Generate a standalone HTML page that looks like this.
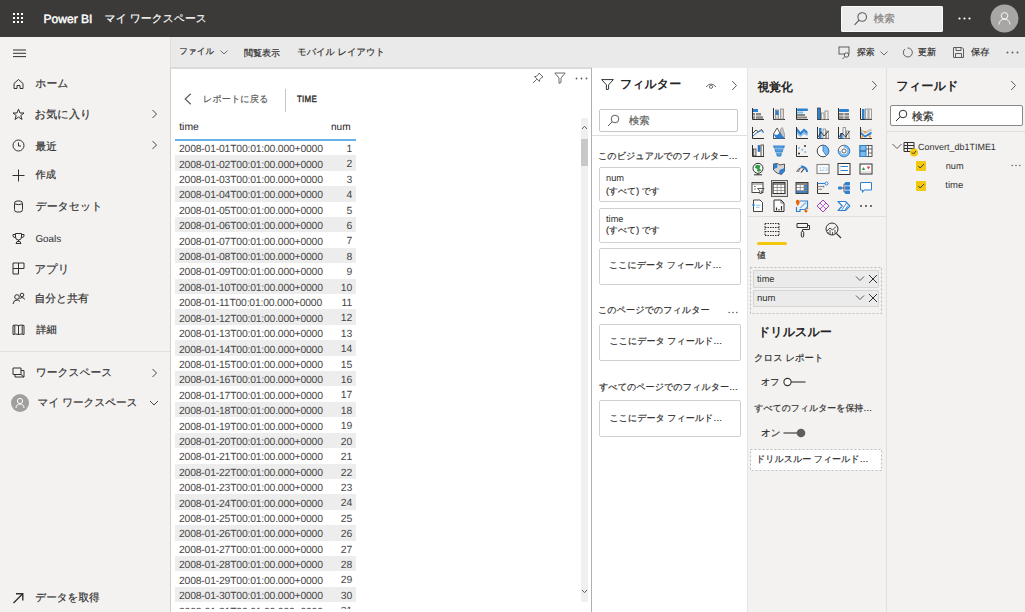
<!DOCTYPE html>
<html><head><meta charset="utf-8"><style>
html,body{margin:0;padding:0}
body{width:1025px;height:612px;overflow:hidden;position:relative;font-family:"Liberation Sans",sans-serif;background:#fff;text-rendering:geometricPrecision}
.a{position:absolute;white-space:nowrap;-webkit-text-stroke:0.2px currentColor}
svg.a{overflow:visible}
.ns{-webkit-text-stroke:0}
</style></head><body>
<div class="a" style="left:0px;top:0px;width:1025px;height:37px;background:#3b3a39;"></div>
<div class="a" style="left:0px;top:37px;width:170px;height:575px;background:#f3f2f1;"></div>
<div class="a" style="left:170px;top:37px;width:855px;height:31px;background:#eaeaea;"></div>
<div class="a" style="left:170px;top:67px;width:422px;height:2px;background:#dadada;"></div>
<div class="a" style="left:170px;top:37px;width:1px;height:30px;background:#dddddd;"></div>
<div class="a" style="left:170px;top:68px;width:1px;height:544px;background:#cfcfcf;"></div>
<div class="a" style="left:171px;top:69px;width:420px;height:543px;background:#ffffff;"></div>
<div class="a" style="left:591px;top:68px;width:1.3px;height:544px;background:#b0b0b0;"></div>
<div class="a" style="left:592px;top:68px;width:155px;height:544px;background:#ffffff;"></div>
<div class="a" style="left:746.5px;top:68px;width:1.7px;height:544px;background:#e4e4e4;"></div>
<div class="a" style="left:748px;top:68px;width:138px;height:544px;background:#f3f2f1;"></div>
<div class="a" style="left:886px;top:68px;width:1px;height:544px;background:#e1dfdd;"></div>
<div class="a" style="left:887px;top:68px;width:138px;height:544px;background:#f3f2f1;"></div>
<svg class="a" style="left:12px;top:12px;" width="12" height="12" viewBox="0 0 12 12"><rect x="1" y="1" width="2" height="2" fill="#fff"/><rect x="1" y="5" width="2" height="2" fill="#fff"/><rect x="1" y="9" width="2" height="2" fill="#fff"/><rect x="5" y="1" width="2" height="2" fill="#fff"/><rect x="5" y="5" width="2" height="2" fill="#fff"/><rect x="5" y="9" width="2" height="2" fill="#fff"/><rect x="9" y="1" width="2" height="2" fill="#fff"/><rect x="9" y="5" width="2" height="2" fill="#fff"/><rect x="9" y="9" width="2" height="2" fill="#fff"/></svg>
<div class="a ns" style="left:43.60px;top:11.00px;font-size:12.04px;line-height:16px;color:#ffffff;font-weight:400;-webkit-text-stroke:0.45px currentColor;">Power BI</div>
<div class="a" style="left:104.60px;top:10.60px;font-size:10.84px;line-height:16px;color:#ffffff;font-weight:400;">マイ ワークスペース</div>
<div class="a" style="left:840.5px;top:5.5px;width:102px;height:26px;background:#ececec;border-radius:2px;box-shadow:inset 0 0 0 1px #fafafa;"></div>
<svg class="a" style="left:853.5px;top:11.5px;" width="14" height="14" viewBox="0 0 14 14"><circle cx="8.2" cy="5" r="4.3" fill="none" stroke="#605e5c" stroke-width="1.1"/><line x1="5.2" y1="8" x2="0.6" y2="12.8" stroke="#605e5c" stroke-width="1.1"/></svg>
<div class="a" style="left:873.80px;top:11.80px;font-size:10.49px;line-height:16px;color:#858381;font-weight:400;">検索</div>
<svg class="a" style="left:958px;top:17px;" width="13" height="3" viewBox="0 0 13 3"><circle cx="1.5" cy="1.5" r="1.1" fill="#fff"/><circle cx="6.5" cy="1.5" r="1.1" fill="#fff"/><circle cx="11.5" cy="1.5" r="1.1" fill="#fff"/></svg>
<svg class="a" style="left:990px;top:4px;" width="29" height="29" viewBox="0 0 29 29"><circle cx="14.5" cy="14.5" r="14" fill="#a8a6a4"/><circle cx="14.5" cy="11.8" r="3.3" fill="none" stroke="#fff" stroke-width="0.9"/><path d="M9 20.5c0-3.2 2.5-5.4 5.5-5.4s5.5 2.2 5.5 5.4" fill="none" stroke="#fff" stroke-width="0.9"/></svg>
<svg class="a" style="left:13px;top:49px;" width="13" height="9" viewBox="0 0 13 9"><rect x="0" y="0.5" width="13" height="1" fill="#323130"/><rect x="0" y="3.8" width="13" height="1" fill="#323130"/><rect x="0" y="7.1" width="13" height="1" fill="#323130"/></svg>
<svg class="a" style="left:12px;top:77.2px;" width="13" height="13" viewBox="0 0 13 13"><path d="M2 6.5L6.5 2.5L11 6.5V11.5H8V8.5H5V11.5H2Z" fill="none" stroke="#323130" stroke-width="1"/></svg>
<div class="a" style="left:35.30px;top:75.75px;font-size:10.89px;line-height:16px;color:#323130;font-weight:400;">ホーム</div>
<svg class="a" style="left:12px;top:107.9px;" width="13" height="13" viewBox="0 0 13 13"><path d="M6.5 1.2L8 5H12L8.8 7.5L10 11.5L6.5 9L3 11.5L4.2 7.5L1 5H5Z" fill="none" stroke="#323130" stroke-width="1"/></svg>
<div class="a" style="left:34.60px;top:106.65px;font-size:11.24px;line-height:16px;color:#323130;font-weight:400;">お気に入り</div>
<svg class="a" style="left:151px;top:109.4px;" width="7" height="10" viewBox="0 0 7 10"><path d="M1.5 1L5.5 5L1.5 9" fill="none" stroke="#484644" stroke-width="1"/></svg>
<svg class="a" style="left:12px;top:138.8px;" width="13" height="13" viewBox="0 0 13 13"><circle cx="6.5" cy="6.5" r="5.5" fill="none" stroke="#323130" stroke-width="1"/><path d="M6.5 3.5V7H9" fill="none" stroke="#323130" stroke-width="1"/></svg>
<div class="a" style="left:35.60px;top:138.60px;font-size:10.59px;line-height:16px;color:#323130;font-weight:400;">最近</div>
<svg class="a" style="left:151px;top:140.3px;" width="7" height="10" viewBox="0 0 7 10"><path d="M1.5 1L5.5 5L1.5 9" fill="none" stroke="#484644" stroke-width="1"/></svg>
<svg class="a" style="left:12px;top:168.9px;" width="13" height="13" viewBox="0 0 13 13"><path d="M6.5 0.5V12.5M0.5 6.5H12.5" stroke="#323130" stroke-width="1"/></svg>
<div class="a" style="left:35.60px;top:167.80px;font-size:10.27px;line-height:16px;color:#323130;font-weight:400;">作成</div>
<svg class="a" style="left:12px;top:200.0px;" width="13" height="13" viewBox="0 0 13 13"><rect x="2.5" y="1" width="8" height="11" rx="2.5" fill="none" stroke="#323130" stroke-width="1"/><path d="M2.5 3.8Q6.5 5.6 10.5 3.8" fill="none" stroke="#323130" stroke-width="1"/></svg>
<div class="a" style="left:35.40px;top:198.70px;font-size:10.99px;line-height:16px;color:#323130;font-weight:400;">データセット</div>
<svg class="a" style="left:12px;top:231.5px;" width="13" height="13" viewBox="0 0 13 13"><path d="M3.5 1.5H9.5V5Q9.5 8 6.5 8Q3.5 8 3.5 5Z M3.5 2.5H1V4Q1 5.5 3.6 5.6 M9.5 2.5H12V4Q12 5.5 9.4 5.6 M6.5 8V9.5 M4 11.5H9L8 9.5H5Z" fill="none" stroke="#323130" stroke-width="1"/></svg>
<div class="a ns" style="left:35.40px;top:231.65px;font-size:9.91px;line-height:16px;color:#323130;font-weight:400;">Goals</div>
<svg class="a" style="left:12px;top:261.8px;" width="13" height="13" viewBox="0 0 13 13"><path d="M1 1H6.5V12H1Z M6.5 1H12V6.5H6.5 M1 6.5H6.5" fill="none" stroke="#323130" stroke-width="1"/></svg>
<div class="a" style="left:34.40px;top:261.60px;font-size:11.46px;line-height:16px;color:#323130;font-weight:400;">アプリ</div>
<svg class="a" style="left:12px;top:291.9px;" width="13" height="13" viewBox="0 0 13 13"><circle cx="5" cy="5" r="2.3" fill="none" stroke="#323130" stroke-width="1"/><path d="M1 12Q1.5 8 5 8Q7 8 8 9.5" fill="none" stroke="#323130" stroke-width="1"/><circle cx="10" cy="3" r="1.8" fill="none" stroke="#323130" stroke-width="1"/><path d="M7.5 7Q8.5 5.5 10 5.5Q12 5.5 12.5 7.5" fill="none" stroke="#323130" stroke-width="1"/></svg>
<div class="a" style="left:34.40px;top:290.70px;font-size:10.84px;line-height:16px;color:#323130;font-weight:400;">自分と共有</div>
<svg class="a" style="left:12px;top:323.3px;" width="13" height="13" viewBox="0 0 13 13"><path d="M1 2.5Q3.5 1.5 6.5 2.5Q9.5 1.5 12 2.5V11.5Q9.5 10.5 6.5 11.5Q3.5 10.5 1 11.5Z M6.5 2.5V11.5 M2.8 2.2V10.8 M10.2 2.2V10.8" fill="none" stroke="#323130" stroke-width="1"/></svg>
<div class="a" style="left:36.20px;top:322.70px;font-size:10.24px;line-height:16px;color:#323130;font-weight:400;">詳細</div>
<svg class="a" style="left:12px;top:366.0px;" width="13" height="13" viewBox="0 0 13 13"><path d="M1 2H9V8.5H1Z M3 8.5V11H12V4.5H9" fill="none" stroke="#323130" stroke-width="1"/><path d="M9 8.5L12 11" stroke="#323130" stroke-width="1"/></svg>
<div class="a" style="left:35.70px;top:364.70px;font-size:10.78px;line-height:16px;color:#323130;font-weight:400;">ワークスペース</div>
<svg class="a" style="left:151px;top:367.5px;" width="7" height="10" viewBox="0 0 7 10"><path d="M1.5 1L5.5 5L1.5 9" fill="none" stroke="#484644" stroke-width="1"/></svg>
<svg class="a" style="left:11px;top:394px;" width="18" height="18" viewBox="0 0 18 18"><circle cx="9" cy="9" r="9" fill="#a19f9d"/><circle cx="9" cy="7" r="2.6" fill="none" stroke="#fff" stroke-width="1"/><path d="M5 14c0-2.5 1.8-4 4-4s4 1.5 4 4" fill="none" stroke="#fff" stroke-width="1"/></svg>
<div class="a" style="left:37.60px;top:395.00px;font-size:10.59px;line-height:16px;color:#323130;font-weight:400;">マイ ワークスペース</div>
<svg class="a" style="left:149px;top:400px;" width="10" height="6" viewBox="0 0 10 6"><path d="M1 1L5 5L9 1" fill="none" stroke="#484644" stroke-width="1"/></svg>
<svg class="a" style="left:12px;top:590.8px;" width="13" height="13" viewBox="0 0 13 13"><path d="M1.5 12L10.5 3M4 2.8H10.8V9.6" fill="none" stroke="#323130" stroke-width="1.4"/></svg>
<div class="a" style="left:35.30px;top:590.00px;font-size:10.62px;line-height:16px;color:#323130;font-weight:400;">データを取得</div>
<div class="a" style="left:0px;top:351px;width:170px;height:1px;background:#e1dfdd;"></div>
<div class="a" style="left:179.20px;top:43.40px;font-size:8.59px;line-height:16px;color:#323130;font-weight:400;">ファイル</div>
<svg class="a" style="left:220px;top:50px;" width="8" height="5" viewBox="0 0 8 5"><path d="M0.5 0.5L4 4L7.5 0.5" fill="none" stroke="#605e5c" stroke-width="0.9"/></svg>
<div class="a" style="left:244.00px;top:44.60px;font-size:8.98px;line-height:16px;color:#323130;font-weight:400;">閲覧表示</div>
<div class="a" style="left:297.20px;top:43.60px;font-size:9.25px;line-height:16px;color:#323130;font-weight:400;">モバイル レイアウト</div>
<svg class="a" style="left:838px;top:46px;" width="13" height="13" viewBox="0 0 13 13"><rect x="1" y="1" width="10" height="7" fill="none" stroke="#605e5c" stroke-width="1"/><circle cx="8.5" cy="9" r="2.2" fill="#eaeaea" stroke="#605e5c" stroke-width="1"/><line x1="7" y1="10.5" x2="4.5" y2="13" stroke="#605e5c" stroke-width="1"/></svg>
<div class="a" style="left:857.08px;top:44.46px;font-size:8.79px;line-height:16px;color:#323130;font-weight:400;">探索</div>
<svg class="a" style="left:880px;top:51px;" width="8" height="5" viewBox="0 0 8 5"><path d="M0.5 0.5L4 4L7.5 0.5" fill="none" stroke="#605e5c" stroke-width="0.9"/></svg>
<svg class="a" style="left:902px;top:47px;" width="11" height="11" viewBox="0 0 11 11"><path d="M3 2A4.5 4.5 0 1 0 5.5 1" fill="none" stroke="#605e5c" stroke-width="1"/></svg>
<div class="a" style="left:917.77px;top:44.46px;font-size:9.18px;line-height:16px;color:#323130;font-weight:400;">更新</div>
<svg class="a" style="left:953px;top:47px;" width="11" height="11" viewBox="0 0 11 11"><path d="M0.5 0.5H9L10.5 2V10.5H0.5Z M3 0.5V3.5H8V0.5 M2.5 10.5V6.5H8.5V10.5" fill="none" stroke="#605e5c" stroke-width="1"/></svg>
<div class="a" style="left:971.00px;top:44.46px;font-size:9.23px;line-height:16px;color:#323130;font-weight:400;">保存</div>
<svg class="a" style="left:1006px;top:51px;" width="13" height="3" viewBox="0 0 13 3"><circle cx="1.5" cy="1.5" r="1" fill="#605e5c"/><circle cx="6.5" cy="1.5" r="1" fill="#605e5c"/><circle cx="11.5" cy="1.5" r="1" fill="#605e5c"/></svg>
<svg class="a" style="left:532px;top:72px;" width="12" height="12" viewBox="0 0 12 12"><path d="M7 1L11 5L9.5 5.5L7.5 8L7.5 9.5L2.5 4.5L4 4.5L6.5 2.5Z M4.8 7.2L1 11" fill="none" stroke="#605e5c" stroke-width="0.9"/></svg>
<svg class="a" style="left:554px;top:72px;" width="12" height="12" viewBox="0 0 12 12"><path d="M0.8 1H11.2L7 6V10.5L5 11.3V6Z" fill="none" stroke="#605e5c" stroke-width="0.9"/></svg>
<svg class="a" style="left:575px;top:77px;" width="13" height="3" viewBox="0 0 13 3"><circle cx="1.5" cy="1.5" r="0.9" fill="#605e5c"/><circle cx="6.5" cy="1.5" r="0.9" fill="#605e5c"/><circle cx="11.5" cy="1.5" r="0.9" fill="#605e5c"/></svg>
<svg class="a" style="left:184px;top:92.5px;" width="8" height="12" viewBox="0 0 8 12"><path d="M6.8 0.8L1.2 6L6.8 11.2" fill="none" stroke="#605e5c" stroke-width="1.2"/></svg>
<div class="a" style="left:203.00px;top:90.90px;font-size:9.19px;line-height:16px;color:#605e5c;font-weight:400;">レポートに戻る</div>
<div class="a" style="left:285px;top:89px;width:1px;height:23px;background:#c8c6c4;"></div>
<div class="a ns" style="left:297.37px;top:90.52px;font-size:9.00px;line-height:16px;color:#323130;font-weight:400;letter-spacing:0.3px;-webkit-text-stroke:0.4px currentColor;transform:scaleX(0.88);transform-origin:0 50%;">TIME</div>
<div class="a ns" style="left:179.20px;top:120.10px;font-size:10.39px;line-height:16px;color:#252423;font-weight:400;">time</div>
<div class="a ns" style="left:331.00px;top:120.00px;font-size:10.11px;line-height:16px;color:#252423;font-weight:400;">num</div>
<div class="a" style="left:175px;top:139px;width:181px;height:2px;background:#6cb0e8;"></div>
<div class="a" style="left:171px;top:68px;width:405px;height:541px;overflow:hidden">
<div class="a ns" style="left:8px;top:74.20px;font-size:10.4px;letter-spacing:-0.2px;line-height:15.4px;color:#464544">2008-01-01T00:01:00.000+0000</div>
<div class="a ns" style="left:130px;top:73.90px;width:51px;text-align:right;font-size:10.4px;letter-spacing:-0.2px;line-height:15.4px;color:#464544">1</div>
<div class="a" style="left:4px;top:87.31px;width:181px;height:15.4px;background:#ededed"></div>
<div class="a ns" style="left:8px;top:89.61px;font-size:10.4px;letter-spacing:-0.2px;line-height:15.4px;color:#464544">2008-01-02T00:01:00.000+0000</div>
<div class="a ns" style="left:130px;top:89.31px;width:51px;text-align:right;font-size:10.4px;letter-spacing:-0.2px;line-height:15.4px;color:#464544">2</div>
<div class="a ns" style="left:8px;top:105.02px;font-size:10.4px;letter-spacing:-0.2px;line-height:15.4px;color:#464544">2008-01-03T00:01:00.000+0000</div>
<div class="a ns" style="left:130px;top:104.72px;width:51px;text-align:right;font-size:10.4px;letter-spacing:-0.2px;line-height:15.4px;color:#464544">3</div>
<div class="a" style="left:4px;top:118.13px;width:181px;height:15.4px;background:#ededed"></div>
<div class="a ns" style="left:8px;top:120.43px;font-size:10.4px;letter-spacing:-0.2px;line-height:15.4px;color:#464544">2008-01-04T00:01:00.000+0000</div>
<div class="a ns" style="left:130px;top:120.13px;width:51px;text-align:right;font-size:10.4px;letter-spacing:-0.2px;line-height:15.4px;color:#464544">4</div>
<div class="a ns" style="left:8px;top:135.84px;font-size:10.4px;letter-spacing:-0.2px;line-height:15.4px;color:#464544">2008-01-05T00:01:00.000+0000</div>
<div class="a ns" style="left:130px;top:135.54px;width:51px;text-align:right;font-size:10.4px;letter-spacing:-0.2px;line-height:15.4px;color:#464544">5</div>
<div class="a" style="left:4px;top:148.95px;width:181px;height:15.4px;background:#ededed"></div>
<div class="a ns" style="left:8px;top:151.25px;font-size:10.4px;letter-spacing:-0.2px;line-height:15.4px;color:#464544">2008-01-06T00:01:00.000+0000</div>
<div class="a ns" style="left:130px;top:150.95px;width:51px;text-align:right;font-size:10.4px;letter-spacing:-0.2px;line-height:15.4px;color:#464544">6</div>
<div class="a ns" style="left:8px;top:166.66px;font-size:10.4px;letter-spacing:-0.2px;line-height:15.4px;color:#464544">2008-01-07T00:01:00.000+0000</div>
<div class="a ns" style="left:130px;top:166.36px;width:51px;text-align:right;font-size:10.4px;letter-spacing:-0.2px;line-height:15.4px;color:#464544">7</div>
<div class="a" style="left:4px;top:179.77px;width:181px;height:15.4px;background:#ededed"></div>
<div class="a ns" style="left:8px;top:182.07px;font-size:10.4px;letter-spacing:-0.2px;line-height:15.4px;color:#464544">2008-01-08T00:01:00.000+0000</div>
<div class="a ns" style="left:130px;top:181.77px;width:51px;text-align:right;font-size:10.4px;letter-spacing:-0.2px;line-height:15.4px;color:#464544">8</div>
<div class="a ns" style="left:8px;top:197.48px;font-size:10.4px;letter-spacing:-0.2px;line-height:15.4px;color:#464544">2008-01-09T00:01:00.000+0000</div>
<div class="a ns" style="left:130px;top:197.18px;width:51px;text-align:right;font-size:10.4px;letter-spacing:-0.2px;line-height:15.4px;color:#464544">9</div>
<div class="a" style="left:4px;top:210.59px;width:181px;height:15.4px;background:#ededed"></div>
<div class="a ns" style="left:8px;top:212.89px;font-size:10.4px;letter-spacing:-0.2px;line-height:15.4px;color:#464544">2008-01-10T00:01:00.000+0000</div>
<div class="a ns" style="left:130px;top:212.59px;width:51px;text-align:right;font-size:10.4px;letter-spacing:-0.2px;line-height:15.4px;color:#464544">10</div>
<div class="a ns" style="left:8px;top:228.30px;font-size:10.4px;letter-spacing:-0.2px;line-height:15.4px;color:#464544">2008-01-11T00:01:00.000+0000</div>
<div class="a ns" style="left:130px;top:228.00px;width:51px;text-align:right;font-size:10.4px;letter-spacing:-0.2px;line-height:15.4px;color:#464544">11</div>
<div class="a" style="left:4px;top:241.41px;width:181px;height:15.4px;background:#ededed"></div>
<div class="a ns" style="left:8px;top:243.71px;font-size:10.4px;letter-spacing:-0.2px;line-height:15.4px;color:#464544">2008-01-12T00:01:00.000+0000</div>
<div class="a ns" style="left:130px;top:243.41px;width:51px;text-align:right;font-size:10.4px;letter-spacing:-0.2px;line-height:15.4px;color:#464544">12</div>
<div class="a ns" style="left:8px;top:259.12px;font-size:10.4px;letter-spacing:-0.2px;line-height:15.4px;color:#464544">2008-01-13T00:01:00.000+0000</div>
<div class="a ns" style="left:130px;top:258.82px;width:51px;text-align:right;font-size:10.4px;letter-spacing:-0.2px;line-height:15.4px;color:#464544">13</div>
<div class="a" style="left:4px;top:272.23px;width:181px;height:15.4px;background:#ededed"></div>
<div class="a ns" style="left:8px;top:274.53px;font-size:10.4px;letter-spacing:-0.2px;line-height:15.4px;color:#464544">2008-01-14T00:01:00.000+0000</div>
<div class="a ns" style="left:130px;top:274.23px;width:51px;text-align:right;font-size:10.4px;letter-spacing:-0.2px;line-height:15.4px;color:#464544">14</div>
<div class="a ns" style="left:8px;top:289.94px;font-size:10.4px;letter-spacing:-0.2px;line-height:15.4px;color:#464544">2008-01-15T00:01:00.000+0000</div>
<div class="a ns" style="left:130px;top:289.64px;width:51px;text-align:right;font-size:10.4px;letter-spacing:-0.2px;line-height:15.4px;color:#464544">15</div>
<div class="a" style="left:4px;top:303.05px;width:181px;height:15.4px;background:#ededed"></div>
<div class="a ns" style="left:8px;top:305.35px;font-size:10.4px;letter-spacing:-0.2px;line-height:15.4px;color:#464544">2008-01-16T00:01:00.000+0000</div>
<div class="a ns" style="left:130px;top:305.05px;width:51px;text-align:right;font-size:10.4px;letter-spacing:-0.2px;line-height:15.4px;color:#464544">16</div>
<div class="a ns" style="left:8px;top:320.76px;font-size:10.4px;letter-spacing:-0.2px;line-height:15.4px;color:#464544">2008-01-17T00:01:00.000+0000</div>
<div class="a ns" style="left:130px;top:320.46px;width:51px;text-align:right;font-size:10.4px;letter-spacing:-0.2px;line-height:15.4px;color:#464544">17</div>
<div class="a" style="left:4px;top:333.87px;width:181px;height:15.4px;background:#ededed"></div>
<div class="a ns" style="left:8px;top:336.17px;font-size:10.4px;letter-spacing:-0.2px;line-height:15.4px;color:#464544">2008-01-18T00:01:00.000+0000</div>
<div class="a ns" style="left:130px;top:335.87px;width:51px;text-align:right;font-size:10.4px;letter-spacing:-0.2px;line-height:15.4px;color:#464544">18</div>
<div class="a ns" style="left:8px;top:351.58px;font-size:10.4px;letter-spacing:-0.2px;line-height:15.4px;color:#464544">2008-01-19T00:01:00.000+0000</div>
<div class="a ns" style="left:130px;top:351.28px;width:51px;text-align:right;font-size:10.4px;letter-spacing:-0.2px;line-height:15.4px;color:#464544">19</div>
<div class="a" style="left:4px;top:364.69px;width:181px;height:15.4px;background:#ededed"></div>
<div class="a ns" style="left:8px;top:366.99px;font-size:10.4px;letter-spacing:-0.2px;line-height:15.4px;color:#464544">2008-01-20T00:01:00.000+0000</div>
<div class="a ns" style="left:130px;top:366.69px;width:51px;text-align:right;font-size:10.4px;letter-spacing:-0.2px;line-height:15.4px;color:#464544">20</div>
<div class="a ns" style="left:8px;top:382.40px;font-size:10.4px;letter-spacing:-0.2px;line-height:15.4px;color:#464544">2008-01-21T00:01:00.000+0000</div>
<div class="a ns" style="left:130px;top:382.10px;width:51px;text-align:right;font-size:10.4px;letter-spacing:-0.2px;line-height:15.4px;color:#464544">21</div>
<div class="a" style="left:4px;top:395.51px;width:181px;height:15.4px;background:#ededed"></div>
<div class="a ns" style="left:8px;top:397.81px;font-size:10.4px;letter-spacing:-0.2px;line-height:15.4px;color:#464544">2008-01-22T00:01:00.000+0000</div>
<div class="a ns" style="left:130px;top:397.51px;width:51px;text-align:right;font-size:10.4px;letter-spacing:-0.2px;line-height:15.4px;color:#464544">22</div>
<div class="a ns" style="left:8px;top:413.22px;font-size:10.4px;letter-spacing:-0.2px;line-height:15.4px;color:#464544">2008-01-23T00:01:00.000+0000</div>
<div class="a ns" style="left:130px;top:412.92px;width:51px;text-align:right;font-size:10.4px;letter-spacing:-0.2px;line-height:15.4px;color:#464544">23</div>
<div class="a" style="left:4px;top:426.33px;width:181px;height:15.4px;background:#ededed"></div>
<div class="a ns" style="left:8px;top:428.63px;font-size:10.4px;letter-spacing:-0.2px;line-height:15.4px;color:#464544">2008-01-24T00:01:00.000+0000</div>
<div class="a ns" style="left:130px;top:428.33px;width:51px;text-align:right;font-size:10.4px;letter-spacing:-0.2px;line-height:15.4px;color:#464544">24</div>
<div class="a ns" style="left:8px;top:444.04px;font-size:10.4px;letter-spacing:-0.2px;line-height:15.4px;color:#464544">2008-01-25T00:01:00.000+0000</div>
<div class="a ns" style="left:130px;top:443.74px;width:51px;text-align:right;font-size:10.4px;letter-spacing:-0.2px;line-height:15.4px;color:#464544">25</div>
<div class="a" style="left:4px;top:457.15px;width:181px;height:15.4px;background:#ededed"></div>
<div class="a ns" style="left:8px;top:459.45px;font-size:10.4px;letter-spacing:-0.2px;line-height:15.4px;color:#464544">2008-01-26T00:01:00.000+0000</div>
<div class="a ns" style="left:130px;top:459.15px;width:51px;text-align:right;font-size:10.4px;letter-spacing:-0.2px;line-height:15.4px;color:#464544">26</div>
<div class="a ns" style="left:8px;top:474.86px;font-size:10.4px;letter-spacing:-0.2px;line-height:15.4px;color:#464544">2008-01-27T00:01:00.000+0000</div>
<div class="a ns" style="left:130px;top:474.56px;width:51px;text-align:right;font-size:10.4px;letter-spacing:-0.2px;line-height:15.4px;color:#464544">27</div>
<div class="a" style="left:4px;top:487.97px;width:181px;height:15.4px;background:#ededed"></div>
<div class="a ns" style="left:8px;top:490.27px;font-size:10.4px;letter-spacing:-0.2px;line-height:15.4px;color:#464544">2008-01-28T00:01:00.000+0000</div>
<div class="a ns" style="left:130px;top:489.97px;width:51px;text-align:right;font-size:10.4px;letter-spacing:-0.2px;line-height:15.4px;color:#464544">28</div>
<div class="a ns" style="left:8px;top:505.68px;font-size:10.4px;letter-spacing:-0.2px;line-height:15.4px;color:#464544">2008-01-29T00:01:00.000+0000</div>
<div class="a ns" style="left:130px;top:505.38px;width:51px;text-align:right;font-size:10.4px;letter-spacing:-0.2px;line-height:15.4px;color:#464544">29</div>
<div class="a" style="left:4px;top:518.79px;width:181px;height:15.4px;background:#ededed"></div>
<div class="a ns" style="left:8px;top:521.09px;font-size:10.4px;letter-spacing:-0.2px;line-height:15.4px;color:#464544">2008-01-30T00:01:00.000+0000</div>
<div class="a ns" style="left:130px;top:520.79px;width:51px;text-align:right;font-size:10.4px;letter-spacing:-0.2px;line-height:15.4px;color:#464544">30</div>
<div class="a ns" style="left:8px;top:536.50px;font-size:10.4px;letter-spacing:-0.2px;line-height:15.4px;color:#464544">2008-01-31T00:01:00.000+0000</div>
<div class="a ns" style="left:130px;top:536.20px;width:51px;text-align:right;font-size:10.4px;letter-spacing:-0.2px;line-height:15.4px;color:#464544">31</div>
</div>
<div class="a" style="left:581px;top:118px;width:7px;height:484px;background:#f0f0f0;"></div>
<div class="a" style="left:581px;top:139px;width:7px;height:27px;background:#c8c8c8;"></div>
<svg class="a" style="left:581px;top:125px;" width="7" height="5" viewBox="0 0 7 5"><path d="M1 4L3.5 1.3L6 4" fill="none" stroke="#605e5c" stroke-width="1"/></svg>
<svg class="a" style="left:581px;top:589px;" width="7" height="5" viewBox="0 0 7 5"><path d="M1 1L3.5 3.7L6 1" fill="none" stroke="#605e5c" stroke-width="1"/></svg>
<svg class="a" style="left:601px;top:78.5px;" width="13" height="11" viewBox="0 0 13 11"><path d="M0.6 0.6H12.4L7.6 5.8V10.2L5.4 10.6V5.8Z" fill="none" stroke="#323130" stroke-width="1" stroke-linejoin="round"/></svg>
<div class="a ns" style="left:620.00px;top:75.90px;font-size:12.00px;line-height:16px;color:#252423;font-weight:700;">フィルター</div>
<svg class="a" style="left:705px;top:81px;" width="12" height="9" viewBox="0 0 12 9"><path d="M1 6Q6 0 11 6" fill="none" stroke="#605e5c" stroke-width="0.9"/><circle cx="6" cy="5.8" r="1.6" fill="none" stroke="#605e5c" stroke-width="0.9"/></svg>
<svg class="a" style="left:731px;top:80px;" width="7" height="11" viewBox="0 0 7 11"><path d="M1.2 1L5.5 5.5L1.2 10" fill="none" stroke="#605e5c" stroke-width="1"/></svg>
<div class="a" style="left:598.5px;top:108.5px;width:137px;height:21px;border:1px solid #c8c6c4;border-radius:2px"></div>
<svg class="a" style="left:607px;top:114px;" width="13" height="13" viewBox="0 0 13 13"><circle cx="8" cy="5" r="3.8" fill="none" stroke="#605e5c" stroke-width="1"/><line x1="5.3" y1="7.7" x2="1" y2="12" stroke="#605e5c" stroke-width="1"/></svg>
<div class="a" style="left:629.00px;top:113.50px;font-size:10.30px;line-height:16px;color:#605e5c;font-weight:400;">検索</div>
<div class="a" style="left:592px;top:135px;width:155px;height:1px;background:#e1dfdd;"></div>
<div class="a" style="left:598.00px;top:147.70px;font-size:9.14px;line-height:16px;color:#323130;font-weight:400;">このビジュアルでのフィルター…</div>
<div class="a" style="left:598.5px;top:167.4px;width:140px;height:33.0px;border:1px solid #d2d0ce;border-radius:2px;background:#fff"></div>
<div class="a ns" style="left:606.00px;top:169.50px;font-size:9.25px;line-height:16px;color:#323130;font-weight:400;">num</div>
<div class="a" style="left:606.00px;top:182.60px;font-size:8.90px;line-height:16px;color:#323130;font-weight:400;">(すべて) です</div>
<div class="a" style="left:598.5px;top:207.8px;width:140px;height:33.0px;border:1px solid #d2d0ce;border-radius:2px;background:#fff"></div>
<div class="a ns" style="left:606.00px;top:210.60px;font-size:9.25px;line-height:16px;color:#323130;font-weight:400;">time</div>
<div class="a" style="left:606.00px;top:222.40px;font-size:8.90px;line-height:16px;color:#323130;font-weight:400;">(すべて) です</div>
<div class="a" style="left:598.5px;top:247.5px;width:140px;height:35.0px;border:1px solid #d2d0ce;border-radius:2px;background:#fff"></div>
<div class="a" style="left:609.00px;top:257.40px;font-size:9.03px;line-height:16px;color:#323130;font-weight:400;">ここにデータ フィールド…</div>
<div class="a" style="left:598.00px;top:302.20px;font-size:9.13px;line-height:16px;color:#323130;font-weight:400;">このページでのフィルター</div>
<svg class="a" style="left:728px;top:311px;" width="10" height="3" viewBox="0 0 10 3"><circle cx="1.2" cy="1.5" r="0.8" fill="#605e5c"/><circle cx="5" cy="1.5" r="0.8" fill="#605e5c"/><circle cx="8.8" cy="1.5" r="0.8" fill="#605e5c"/></svg>
<div class="a" style="left:598.5px;top:324px;width:140px;height:35px;border:1px solid #d2d0ce;border-radius:2px;background:#fff"></div>
<div class="a" style="left:609.50px;top:333.40px;font-size:9.04px;line-height:16px;color:#323130;font-weight:400;">ここにデータ フィールド…</div>
<div class="a" style="left:599.00px;top:378.90px;font-size:9.12px;line-height:16px;color:#323130;font-weight:400;">すべてのページでのフィルター…</div>
<div class="a" style="left:598.5px;top:400.3px;width:140px;height:34.69999999999999px;border:1px solid #d2d0ce;border-radius:2px;background:#fff"></div>
<div class="a" style="left:609.50px;top:409.70px;font-size:9.04px;line-height:16px;color:#323130;font-weight:400;">ここにデータ フィールド…</div>
<div class="a ns" style="left:757.40px;top:78.55px;font-size:11.81px;line-height:16px;color:#252423;font-weight:700;">視覚化</div>
<svg class="a" style="left:871px;top:80px;" width="7" height="11" viewBox="0 0 7 11"><path d="M1.2 1L5.5 5.5L1.2 10" fill="none" stroke="#605e5c" stroke-width="1"/></svg>
<div class="a" style="left:771px;top:180px;width:14.5px;height:14.5px;border:1.5px solid #605e5c;background:#e1dfdd"></div>
<svg class="a" style="left:751.0px;top:107.2px" width="14" height="14" viewBox="0 0 14 14"><path d="M1.5 1V12.5H13" fill="none" stroke="#323130" stroke-width="1"/><rect x="2" y="2" width="5" height="3" fill="#2f80d1"/><rect x="2" y="6" width="8" height="2.5" fill="#8a8886"/><rect x="2" y="9.3" width="10" height="2.5" fill="#8a8886"/><path d="M4.5 6V12" stroke="#ffffff" stroke-width="0.8"/></svg>
<svg class="a" style="left:772.4px;top:107.2px" width="14" height="14" viewBox="0 0 14 14"><path d="M1.5 1V12.5H13" fill="none" stroke="#323130" stroke-width="1"/><rect x="3.5" y="3" width="3" height="9" fill="#d8d6d4" stroke="#8a8886" stroke-width="0.8"/><rect x="3.5" y="3.5" width="3" height="4.5" fill="#2f80d1"/><rect x="8.5" y="2" width="3" height="10" fill="#d8d6d4" stroke="#8a8886" stroke-width="0.8"/></svg>
<svg class="a" style="left:794.5px;top:107.2px" width="14" height="14" viewBox="0 0 14 14"><path d="M1.5 1V12.5H13" fill="none" stroke="#323130" stroke-width="1"/><rect x="2" y="1.5" width="11" height="2.5" rx="1" fill="#2f80d1"/><rect x="2" y="4.5" width="6" height="2" fill="#7dbbec"/><rect x="2" y="7" width="8" height="2" fill="#8a8886"/><rect x="2" y="9.5" width="10" height="2" fill="#8a8886"/></svg>
<svg class="a" style="left:815.7px;top:107.2px" width="14" height="14" viewBox="0 0 14 14"><path d="M1.5 12.5H13" stroke="#323130" stroke-width="1"/><rect x="1.5" y="1" width="3" height="11.5" fill="#2f80d1" stroke="#323130" stroke-width="0.7"/><rect x="5.5" y="6" width="2.5" height="6.5" fill="none" stroke="#8a8886" stroke-width="0.8"/><rect x="9" y="4" width="3" height="8.5" fill="none" stroke="#8a8886" stroke-width="0.8"/></svg>
<svg class="a" style="left:837.3px;top:107.2px" width="14" height="14" viewBox="0 0 14 14"><path d="M1.5 1V12.5H13" fill="none" stroke="#323130" stroke-width="1"/><rect x="2" y="2" width="10" height="3" rx="1" fill="#2f80d1"/><rect x="2" y="6" width="10" height="2.5" fill="#8a8886"/><rect x="2" y="9.3" width="10" height="2.5" fill="#8a8886"/><path d="M7 6V12" stroke="#ffffff" stroke-width="0.8"/></svg>
<svg class="a" style="left:859.2px;top:107.2px" width="14" height="14" viewBox="0 0 14 14"><path d="M1.5 1V12.5H13" fill="none" stroke="#323130" stroke-width="1"/><rect x="3" y="2" width="2.5" height="10" fill="#2f80d1"/><rect x="6.5" y="2" width="2.5" height="10" fill="none" stroke="#8a8886" stroke-width="0.8"/><rect x="10" y="2" width="2.5" height="10" fill="none" stroke="#8a8886" stroke-width="0.8"/></svg>
<svg class="a" style="left:751.0px;top:125.5px" width="14" height="14" viewBox="0 0 14 14"><path d="M1.5 1V12.5H13" fill="none" stroke="#323130" stroke-width="1"/><path d="M2 7L5 4L7.5 6L10 3.5L12.5 5.5" fill="none" stroke="#323130" stroke-width="0.9"/><path d="M2 10L5 7.5L8 5.5L10.5 4.5L12.5 7" fill="none" stroke="#2f80d1" stroke-width="1"/></svg>
<svg class="a" style="left:772.4px;top:125.5px" width="14" height="14" viewBox="0 0 14 14"><path d="M1.5 12.5H13" stroke="#323130" stroke-width="1"/><path d="M8.5 3L10.5 1.5L12.5 8V12.5H8Z" fill="#c8c6c4" stroke="#8a8886" stroke-width="0.6"/><path d="M1.5 8L5 2L9 9L12.5 12.5H1.5Z" fill="#ffffff" stroke="#323130" stroke-width="0.8"/><path d="M1.5 8L4 12.5H12.5L8 6.5L5 9Z" fill="#2f80d1"/></svg>
<svg class="a" style="left:794.5px;top:125.5px" width="14" height="14" viewBox="0 0 14 14"><path d="M1.5 1V12.5H13" fill="none" stroke="#323130" stroke-width="1"/><path d="M2 2L5.5 6L9 2.5L12.5 5.5V8.5L9 5.5L5.5 9.5L2 5.5Z" fill="#2f80d1"/><path d="M2 5.5L5.5 9.5L9 5.5L12.5 8.5V10L9 8L5.5 11L2 8Z" fill="#7dbbec"/></svg>
<svg class="a" style="left:815.7px;top:125.5px" width="14" height="14" viewBox="0 0 14 14"><path d="M1.5 1V12.5H13" fill="none" stroke="#323130" stroke-width="1"/><rect x="3" y="2" width="2.5" height="10.5" fill="#2f80d1"/><rect x="7" y="3" width="2.5" height="9.5" fill="none" stroke="#8a8886" stroke-width="0.8"/><rect x="10.5" y="5" width="2" height="7.5" fill="none" stroke="#8a8886" stroke-width="0.8"/><path d="M2 11L5 6L8 10L12.5 5" fill="none" stroke="#323130" stroke-width="0.9"/></svg>
<svg class="a" style="left:837.3px;top:125.5px" width="14" height="14" viewBox="0 0 14 14"><path d="M1.5 1V12.5H13" fill="none" stroke="#323130" stroke-width="1"/><rect x="3" y="7" width="2.5" height="5.5" fill="#2f80d1"/><rect x="6" y="1.5" width="2.5" height="11" fill="none" stroke="#8a8886" stroke-width="0.8"/><rect x="9.5" y="5" width="2.5" height="7.5" fill="none" stroke="#8a8886" stroke-width="0.8"/><path d="M2 11L5 7L8.5 11L12.5 5" fill="none" stroke="#323130" stroke-width="0.9"/></svg>
<svg class="a" style="left:859.2px;top:125.5px" width="14" height="14" viewBox="0 0 14 14"><path d="M1.5 1V12.5H13" fill="none" stroke="#323130" stroke-width="1"/><path d="M2 3L6 5.5L10 3.5L12.5 2.5V5L10 6L6 8L2 5.5Z" fill="#c8c6c4"/><path d="M2 6L6 9.5L10 7L12.5 5.5V8L10 9.5L6 11.5L2 8.5Z" fill="#2f80d1"/><rect x="5" y="5" width="2" height="1.5" fill="#f7941d"/><rect x="2.5" y="9.5" width="2" height="2" fill="#f7941d"/><rect x="10" y="9.5" width="2" height="2" fill="#f7941d"/></svg>
<svg class="a" style="left:751.0px;top:144.0px" width="14" height="14" viewBox="0 0 14 14"><path d="M1.5 1V12.5H13" fill="none" stroke="#323130" stroke-width="1"/><rect x="2.5" y="5" width="2.5" height="7" fill="#d8d6d4" stroke="#323130" stroke-width="0.7"/><rect x="7" y="1.5" width="2" height="6" fill="#2f80d1" stroke="#1f5f9e" stroke-width="0.5"/><rect x="10" y="1" width="2.5" height="11.5" fill="none" stroke="#323130" stroke-width="0.8"/><rect x="6" y="8" width="3" height="3" fill="#ffffff"/></svg>
<svg class="a" style="left:772.4px;top:144.0px" width="14" height="14" viewBox="0 0 14 14"><path d="M1 1.5H13L12 4.5H2Z" fill="#2f80d1"/><path d="M2.5 5.3H11.5L10.5 8.5H3.5Z" fill="#2f80d1"/><path d="M4 9.3H10L9 12.5H5Z" fill="#2f80d1"/><path d="M2.5 3H11.5M4 6.8H10M5.5 10.8H8.5" stroke="#7dbbec" stroke-width="0.8"/></svg>
<svg class="a" style="left:794.5px;top:144.0px" width="14" height="14" viewBox="0 0 14 14"><path d="M1.5 1V12.5H13" fill="none" stroke="#323130" stroke-width="1"/><circle cx="4" cy="4" r="1" fill="#7dbbec"/><circle cx="7.3" cy="5.8" r="1" fill="#7dbbec"/><circle cx="10.3" cy="8" r="1" fill="#7dbbec"/><circle cx="10" cy="2" r="1" fill="#323130"/><circle cx="4" cy="9.5" r="1" fill="#323130"/></svg>
<svg class="a" style="left:815.7px;top:144.0px" width="14" height="14" viewBox="0 0 14 14"><circle cx="7" cy="7" r="5.8" fill="#ffffff" stroke="#323130" stroke-width="0.9"/><path d="M7 1.2A5.8 5.8 0 0 1 10.5 11.6L7 7Z" fill="#7dbbec" stroke="#2f80d1" stroke-width="0.9"/></svg>
<svg class="a" style="left:837.3px;top:144.0px" width="14" height="14" viewBox="0 0 14 14"><circle cx="7" cy="7" r="4.5" fill="none" stroke="#7dbbec" stroke-width="2.5"/><path d="M7 1.2A5.8 5.8 0 1 1 1.3 6" fill="none" stroke="#2f80d1" stroke-width="1"/><path d="M7 2.5A4.5 4.5 0 0 0 2.5 7" fill="none" stroke="#f3f2f1" stroke-width="2.6"/><path d="M7 1.2A5.8 5.8 0 0 0 1.2 7" fill="none" stroke="#323130" stroke-width="0.7"/><circle cx="7" cy="7" r="2" fill="#ffffff" stroke="#323130" stroke-width="0.7"/></svg>
<svg class="a" style="left:859.2px;top:144.0px" width="14" height="14" viewBox="0 0 14 14"><rect x="1" y="1.5" width="12" height="11" fill="#ffffff" stroke="#323130" stroke-width="0.8"/><rect x="1" y="1.5" width="6" height="11" fill="#7dbbec" stroke="#2f80d1" stroke-width="1"/><path d="M1 7H7M9.5 1.5V12.5M7 5H13M9.5 9H13" stroke="#323130" stroke-width="0.7"/><path d="M1 7H7" stroke="#2f80d1" stroke-width="1"/></svg>
<svg class="a" style="left:751.0px;top:162.3px" width="14" height="14" viewBox="0 0 14 14"><circle cx="7" cy="6.3" r="5" fill="#ffffff" stroke="#323130" stroke-width="1"/><path d="M4.5 3.5Q7 2 9.5 4L8.5 6.5L10.5 8.5Q8 10.5 6 9L6.5 7L4 6Z" fill="#2e9e44"/><path d="M3 12.8H11M7 11.3V12.8" stroke="#323130" stroke-width="1"/></svg>
<svg class="a" style="left:772.4px;top:162.3px" width="14" height="14" viewBox="0 0 14 14"><path d="M1.5 2L5 1.5L8 3L12.5 2V9L9.5 12.5L5 11L1.5 8Z" fill="#d8d6d4" stroke="#323130" stroke-width="0.8"/><path d="M1.5 2L5 1.5L5.5 5.5L2 7Z" fill="#2f80d1"/><path d="M7.5 8L12.5 6V9L9.5 12.5L7 11.5Z" fill="#2f80d1"/></svg>
<svg class="a" style="left:794.5px;top:162.3px" width="14" height="14" viewBox="0 0 14 14"><path d="M1.8 10A5.5 5.5 0 0 1 12.5 10" fill="none" stroke="#323130" stroke-width="0.8"/><path d="M6 4.7A5.5 5.5 0 0 1 12.2 10" fill="none" stroke="#2f80d1" stroke-width="2.2"/><path d="M3.5 10A3.5 3.5 0 0 1 5.5 6.8" fill="none" stroke="#323130" stroke-width="0.7"/><path d="M6 10.5L9 7" stroke="#323130" stroke-width="1.1"/></svg>
<svg class="a" style="left:815.7px;top:162.3px" width="14" height="14" viewBox="0 0 14 14"><rect x="1" y="2.5" width="12" height="9" fill="#ffffff" stroke="#8a8886" stroke-width="1.2"/><text x="7" y="9.2" font-size="5.5" text-anchor="middle" fill="#7dbbec" font-family="Liberation Sans">123</text></svg>
<svg class="a" style="left:837.3px;top:162.3px" width="14" height="14" viewBox="0 0 14 14"><rect x="1" y="1.5" width="12" height="11" fill="#ffffff" stroke="#323130" stroke-width="1"/><path d="M3.5 4.5H11M3.5 8.5H11" stroke="#2f80d1" stroke-width="1.2"/><path d="M3 3V11" stroke="#c8c6c4" stroke-width="0.6"/></svg>
<svg class="a" style="left:859.2px;top:162.3px" width="14" height="14" viewBox="0 0 14 14"><rect x="1" y="2" width="12" height="10" fill="#ffffff" stroke="#323130" stroke-width="1"/><path d="M2.8 8L4.5 5L6.2 8Z" fill="#2e9e44"/><path d="M7.8 4.5H11.2L9.5 7.5Z" fill="#e03e3e"/><path d="M1.5 10H12.5" stroke="#c8c6c4" stroke-width="1"/></svg>
<svg class="a" style="left:751.0px;top:181.0px" width="14" height="14" viewBox="0 0 14 14"><rect x="1" y="1.5" width="11" height="10" fill="#ffffff" stroke="#323130" stroke-width="0.9"/><path d="M1 3H12" stroke="#8a8886" stroke-width="1.2"/><path d="M3 5.5H5M3 8H5" stroke="#8a8886" stroke-width="1.2"/><path d="M6.5 7.5H13L10.7 10V12.5L8.8 12.5V10Z" fill="#ffffff" stroke="#323130" stroke-width="0.8"/></svg>
<svg class="a" style="left:772.4px;top:181.0px" width="14" height="14" viewBox="0 0 14 14"><rect x="1" y="1.5" width="12" height="11" fill="#8a8886" stroke="#323130" stroke-width="1"/><rect x="1.8" y="4" width="3" height="2.2" fill="#ffffff"/><rect x="5.6" y="4" width="3" height="2.2" fill="#ffffff"/><rect x="9.4" y="4" width="2.8" height="2.2" fill="#ffffff"/><rect x="1.8" y="7" width="3" height="2.2" fill="#ffffff"/><rect x="5.6" y="7" width="3" height="2.2" fill="#ffffff"/><rect x="9.4" y="7" width="2.8" height="2.2" fill="#ffffff"/><rect x="1.8" y="10" width="3" height="2" fill="#ffffff"/><rect x="5.6" y="10" width="3" height="2" fill="#ffffff"/><rect x="9.4" y="10" width="2.8" height="2" fill="#ffffff"/></svg>
<svg class="a" style="left:794.5px;top:181.0px" width="14" height="14" viewBox="0 0 14 14"><rect x="1" y="1.5" width="12" height="11" fill="#8a8886" stroke="#323130" stroke-width="0.9"/><rect x="1.8" y="4" width="3" height="2.2" fill="#ffffff"/><rect x="5.6" y="4" width="3" height="2.2" fill="#ffffff"/><rect x="9.4" y="4" width="2.8" height="2.2" fill="#2f80d1"/><rect x="1.8" y="7" width="3" height="2.2" fill="#ffffff"/><rect x="5.6" y="7" width="3" height="2.2" fill="#ffffff"/><rect x="9.4" y="7" width="2.8" height="2.2" fill="#2f80d1"/><rect x="1.8" y="10" width="3" height="2" fill="#2f80d1"/><rect x="5.6" y="10" width="3" height="2" fill="#2f80d1"/><rect x="9.4" y="10" width="2.8" height="2" fill="#2f80d1"/></svg>
<svg class="a" style="left:815.7px;top:181.0px" width="14" height="14" viewBox="0 0 14 14"><path d="M1.5 1V12.5H13" fill="none" stroke="#323130" stroke-width="1"/><path d="M1.5 2.5H10" stroke="#2f80d1" stroke-width="1"/><circle cx="10.5" cy="2.5" r="1.5" fill="#ffffff" stroke="#2f80d1" stroke-width="1"/><path d="M1.5 5.5H7" stroke="#8a8886" stroke-width="1"/><circle cx="7.5" cy="5.5" r="1" fill="#8a8886"/><path d="M1.5 8.3H4.5" stroke="#8a8886" stroke-width="1"/><circle cx="5" cy="8.3" r="0.9" fill="#8a8886"/></svg>
<svg class="a" style="left:837.3px;top:181.0px" width="14" height="14" viewBox="0 0 14 14"><rect x="1" y="5.5" width="4" height="3" rx="0.8" fill="#2f80d1"/><path d="M5 7H7M8 2.5Q7 2.5 7 4V10Q7 11.5 8 11.5" fill="none" stroke="#323130" stroke-width="0.8"/><rect x="8" y="1" width="5" height="3.5" rx="0.8" fill="#2f80d1"/><rect x="8" y="5.2" width="5" height="3.5" rx="0.8" fill="#2f80d1"/><rect x="8" y="9.5" width="5" height="3.5" rx="0.8" fill="#2f80d1"/></svg>
<svg class="a" style="left:859.2px;top:181.0px" width="14" height="14" viewBox="0 0 14 14"><path d="M1.5 1.5H12.5V9H5L3.5 11.5V9H1.5Z" fill="#ffffff" stroke="#2f80d1" stroke-width="1"/></svg>
<svg class="a" style="left:751.0px;top:199.4px" width="14" height="14" viewBox="0 0 14 14"><path d="M2.5 1H9L11.5 3.5V12.5H2.5Z" fill="#ffffff" stroke="#323130" stroke-width="0.9"/><circle cx="2.5" cy="6" r="1.2" fill="#2f80d1"/><path d="M5 6.3H9.5M5 8.3H8.5" stroke="#7dbbec" stroke-width="0.9"/></svg>
<svg class="a" style="left:772.4px;top:199.4px" width="14" height="14" viewBox="0 0 14 14"><path d="M2 1H9L12 4V12.5H2Z" fill="#ffffff" stroke="#323130" stroke-width="1"/><path d="M9 1V4H12" fill="none" stroke="#323130" stroke-width="0.7"/><path d="M4.5 11.5V8.5M7 11.5V10M9.5 11.5V7" stroke="#323130" stroke-width="1.2"/></svg>
<svg class="a" style="left:794.5px;top:199.4px" width="14" height="14" viewBox="0 0 14 14"><path d="M5 2H12.5V8L10 10.5H5V12.5H1.5V8" fill="none" stroke="#2f80d1" stroke-width="1.2"/><path d="M5 9L11 3.5" stroke="#7dbbec" stroke-width="1.4"/><path d="M2.8 0.8Q4.8 0.8 4.8 3Q4.8 4.5 2.8 7Q0.8 4.5 0.8 3Q0.8 0.8 2.8 0.8Z" fill="#e8660d"/><circle cx="11" cy="12" r="1.5" fill="#e8660d"/><circle cx="12.5" cy="9.5" r="0.8" fill="#e8660d"/></svg>
<svg class="a" style="left:815.7px;top:199.4px" width="14" height="14" viewBox="0 0 14 14"><path d="M7 1L13 7L7 13L1 7Z" fill="none" stroke="#a33bc2" stroke-width="1" stroke-linejoin="round"/><path d="M4 4L10 10M10 4L4 10" stroke="#a33bc2" stroke-width="0.8"/><path d="M7 1.5V12.5M1.5 7H12.5" stroke="#f3f2f1" stroke-width="0.3"/></svg>
<svg class="a" style="left:837.3px;top:199.4px" width="14" height="14" viewBox="0 0 14 14"><path d="M1 2.5H8.5L12.8 7L8.5 11.5H1L5.3 7Z" fill="#ffffff" stroke="#2f80d1" stroke-width="1.1" stroke-linejoin="round"/><path d="M4.8 11L9.5 4M7.8 11L11 6.5" stroke="#2f80d1" stroke-width="0.9"/></svg>
<svg class="a" style="left:859.2px;top:199.4px" width="14" height="14" viewBox="0 0 14 14"><circle cx="2" cy="7" r="0.9" fill="#323130"/><circle cx="7" cy="7" r="0.9" fill="#323130"/><circle cx="12" cy="7" r="0.9" fill="#323130"/></svg>
<div class="a" style="left:748px;top:216px;width:138px;height:1px;background:#e1dfdd;"></div>
<svg class="a" style="left:764px;top:222px;" width="17" height="16" viewBox="0 0 17 16"><path d="M1 1.5H15 M1 5.5H15 M1 9.5H15 M1 13.5H15 M1 1.5V13.5 M15 1.5V13.5" fill="none" stroke="#323130" stroke-width="1" stroke-dasharray="1.5 1"/></svg>
<svg class="a" style="left:795px;top:222px;" width="16" height="16" viewBox="0 0 16 16"><path d="M2 1.5H12.5V5.5H2Z M12.5 3.5H14.5V7.5H7.5V9.5" fill="none" stroke="#323130" stroke-width="1"/><rect x="6.3" y="9.5" width="2.4" height="5.5" rx="1" fill="none" stroke="#323130" stroke-width="1"/></svg>
<svg class="a" style="left:825px;top:222px;" width="17" height="17" viewBox="0 0 17 17"><circle cx="7" cy="7" r="6" fill="none" stroke="#323130" stroke-width="1"/><path d="M11.3 11.3L16 16" stroke="#323130" stroke-width="1.2"/><path d="M2 9L5 6L7.5 8L11 4.5" fill="none" stroke="#323130" stroke-width="0.9"/><path d="M3 10V12M5 8V12.5M7.5 10V13M10 8V12" stroke="#323130" stroke-width="0.8"/></svg>
<div class="a" style="left:757px;top:241.5px;width:30px;height:3px;background:#f2c811;border-radius:1.5px;"></div>
<div class="a" style="left:757.00px;top:246.50px;font-size:8.64px;line-height:16px;color:#323130;font-weight:400;">値</div>
<svg class="a" style="left:750px;top:267px;" width="132" height="47" viewBox="0 0 132 47"><rect x="0.5" y="0.5" width="131" height="46" fill="none" stroke="#bdbbb9" stroke-width="1" stroke-dasharray="2 2"/></svg>
<div class="a" style="left:753px;top:270px;width:123.5px;height:15.5px;border:1px solid #d6d4d2;background:#ebebeb;border-radius:1px"></div>
<div class="a ns" style="left:757.00px;top:271.20px;font-size:9.25px;line-height:16px;color:#323130;font-weight:400;">time</div>
<svg class="a" style="left:855px;top:274.8px;" width="10" height="8" viewBox="0 0 10 8"><path d="M1 1.5L5 5.5L9 1.5" fill="none" stroke="#484644" stroke-width="0.9"/></svg>
<svg class="a" style="left:867.5px;top:273.8px;" width="10" height="10" viewBox="0 0 10 10"><path d="M1 1L9 9M9 1L1 9" fill="none" stroke="#323130" stroke-width="1"/></svg>
<div class="a" style="left:753px;top:289.5px;width:123.5px;height:15.5px;border:1px solid #d6d4d2;background:#ebebeb;border-radius:1px"></div>
<div class="a ns" style="left:757.00px;top:290.70px;font-size:9.50px;line-height:16px;color:#323130;font-weight:400;">num</div>
<svg class="a" style="left:855px;top:294.3px;" width="10" height="8" viewBox="0 0 10 8"><path d="M1 1.5L5 5.5L9 1.5" fill="none" stroke="#484644" stroke-width="0.9"/></svg>
<svg class="a" style="left:867.5px;top:293.3px;" width="10" height="10" viewBox="0 0 10 10"><path d="M1 1L9 9M9 1L1 9" fill="none" stroke="#323130" stroke-width="1"/></svg>
<div class="a ns" style="left:757.90px;top:324.25px;font-size:12.12px;line-height:16px;color:#252423;font-weight:700;">ドリルスルー</div>
<div class="a" style="left:754.00px;top:350.25px;font-size:9.38px;line-height:16px;color:#323130;font-weight:400;">クロス レポート</div>
<div class="a" style="left:761.00px;top:373.80px;font-size:9.11px;line-height:16px;color:#323130;font-weight:400;">オフ</div>
<svg class="a" style="left:783px;top:376.5px;" width="23" height="10" viewBox="0 0 23 10"><circle cx="4.5" cy="5" r="3.6" fill="#fff" stroke="#323130" stroke-width="1.1"/><line x1="8.2" y1="5" x2="22.5" y2="5" stroke="#323130" stroke-width="1.1"/></svg>
<div class="a" style="left:754.30px;top:399.95px;font-size:8.94px;line-height:16px;color:#323130;font-weight:400;">すべてのフィルターを保持…</div>
<div class="a" style="left:761.00px;top:425.70px;font-size:9.62px;line-height:16px;color:#323130;font-weight:400;">オン</div>
<svg class="a" style="left:783px;top:427.5px;" width="23" height="10" viewBox="0 0 23 10"><line x1="0.5" y1="5" x2="15" y2="5" stroke="#323130" stroke-width="1.1"/><circle cx="18" cy="5" r="4.3" fill="#605e5c"/></svg>
<svg class="a" style="left:750px;top:449px;" width="132" height="22" viewBox="0 0 132 22"><rect x="0.5" y="0.5" width="131" height="21" fill="#fff" stroke="#bdbbb9" stroke-width="1" stroke-dasharray="2 2"/></svg>
<div class="a" style="left:756.00px;top:450.50px;font-size:9.03px;line-height:16px;color:#323130;font-weight:400;">ドリルスルー フィールド…</div>
<div class="a ns" style="left:896.30px;top:78.40px;font-size:12.22px;line-height:16px;color:#252423;font-weight:700;">フィールド</div>
<svg class="a" style="left:1010px;top:80px;" width="7" height="11" viewBox="0 0 7 11"><path d="M1.2 1L5.5 5.5L1.2 10" fill="none" stroke="#605e5c" stroke-width="1"/></svg>
<div class="a" style="left:890px;top:105px;width:130.5px;height:18.5px;border:1px solid #8a8886;border-radius:2px;background:#fff"></div>
<svg class="a" style="left:895px;top:109px;" width="13" height="13" viewBox="0 0 13 13"><circle cx="8" cy="5" r="3.8" fill="none" stroke="#323130" stroke-width="1"/><line x1="5.3" y1="7.7" x2="1" y2="12" stroke="#323130" stroke-width="1"/></svg>
<div class="a" style="left:912.00px;top:108.60px;font-size:10.86px;line-height:16px;color:#323130;font-weight:400;">検索</div>
<div class="a" style="left:887px;top:130.5px;width:138px;height:1px;background:#e1dfdd;"></div>
<svg class="a" style="left:892px;top:143px;" width="10" height="7" viewBox="0 0 10 7"><path d="M0.5 1L5 5.5L9.5 1" fill="none" stroke="#605e5c" stroke-width="1"/></svg>
<svg class="a" style="left:903px;top:141px;" width="16" height="16" viewBox="0 0 16 16"><path d="M1 1.5H11V10.5H1Z M1 4.5H11 M1 7.5H11 M4.5 1.5V10.5" fill="none" stroke="#323130" stroke-width="1"/><circle cx="11" cy="11.5" r="4" fill="#f2c811"/><path d="M9 11.5L10.5 13L13 10" fill="none" stroke="#252423" stroke-width="0.9"/></svg>
<div class="a ns" style="left:918.10px;top:139.10px;font-size:8.97px;line-height:16px;color:#323130;font-weight:400;">Convert_db1TIME1</div>
<svg class="a" style="left:916px;top:161.2px;" width="10" height="10" viewBox="0 0 10 10"><rect x="0" y="0" width="10" height="10" rx="1" fill="#f2c811"/><path d="M2.2 5L4.2 7L8 3" fill="none" stroke="#323130" stroke-width="0.9"/></svg>
<div class="a ns" style="left:945.70px;top:157.80px;font-size:9.19px;line-height:16px;color:#323130;font-weight:400;">num</div>
<svg class="a" style="left:916px;top:180.5px;" width="10" height="10" viewBox="0 0 10 10"><rect x="0" y="0" width="10" height="10" rx="1" fill="#f2c811"/><path d="M2.2 5L4.2 7L8 3" fill="none" stroke="#323130" stroke-width="0.9"/></svg>
<div class="a ns" style="left:945.30px;top:178.42px;font-size:9.48px;line-height:16px;color:#323130;font-weight:400;">time</div>
<svg class="a" style="left:1011px;top:164.3px;" width="10" height="3" viewBox="0 0 10 3"><circle cx="1.2" cy="1.5" r="0.8" fill="#605e5c"/><circle cx="5" cy="1.5" r="0.8" fill="#605e5c"/><circle cx="8.8" cy="1.5" r="0.8" fill="#605e5c"/></svg>
</body></html>
